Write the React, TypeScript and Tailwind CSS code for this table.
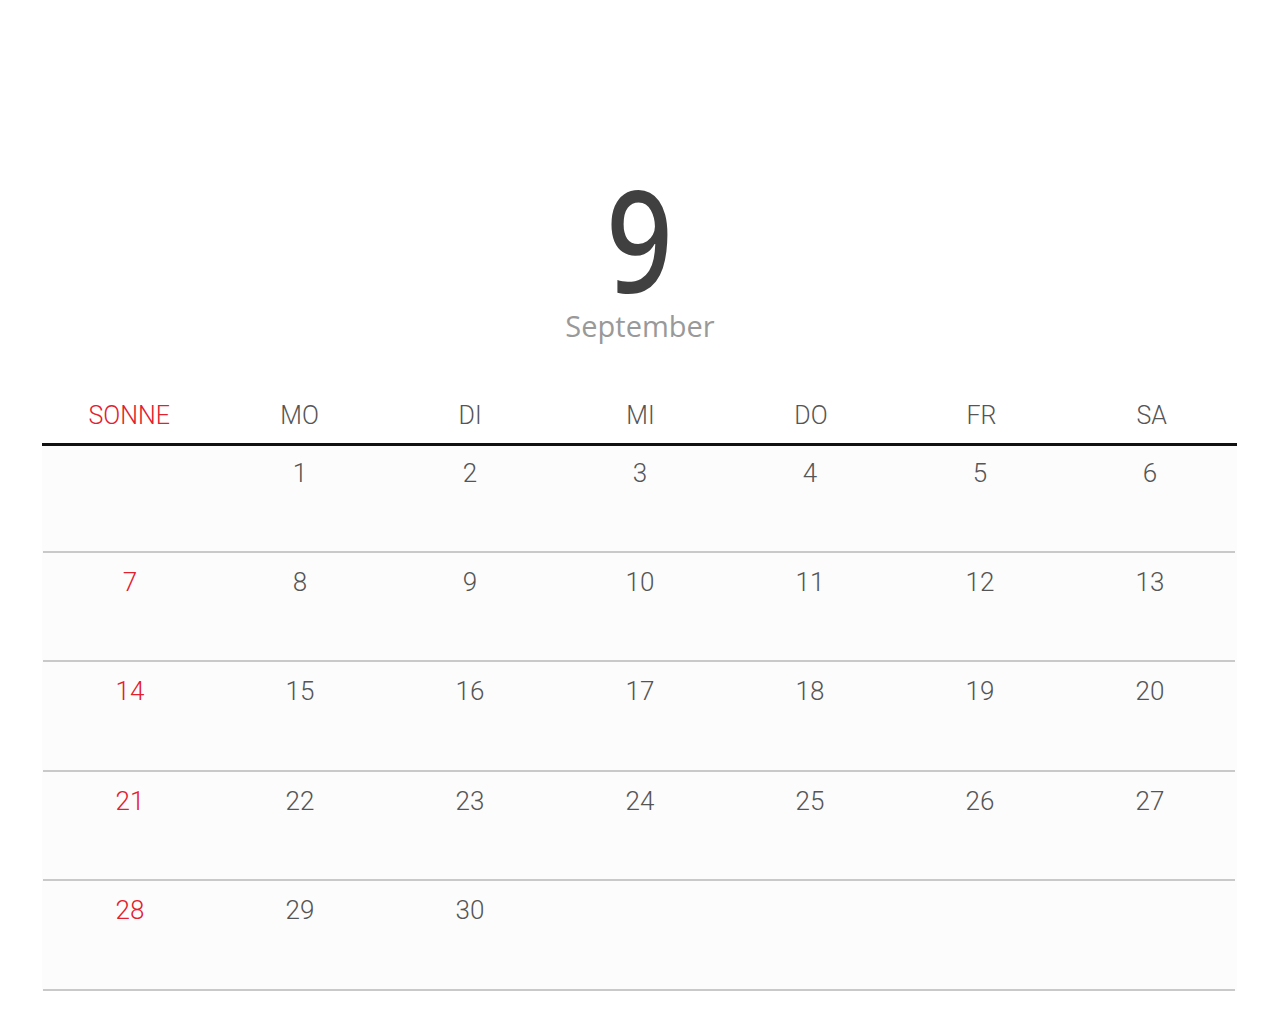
import React from "react";

const headers = ["SONNE", "MO", "DI", "MI", "DO", "FR", "SA"];
const weeks: (number | null)[][] = [
  [null, 1, 2, 3, 4, 5, 6],
  [7, 8, 9, 10, 11, 12, 13],
  [14, 15, 16, 17, 18, 19, 20],
  [21, 22, 23, 24, 25, 26, 27],
  [28, 29, 30, null, null, null, null],
];

export default function App() {
  return (
    <div className="w-[1280px] h-[1031px] bg-white overflow-hidden" style={{ fontFamily: "Roboto, 'Liberation Sans', sans-serif" }}>
      <div className="flex flex-col items-center pt-[183px]">
        <div className="text-[142px] leading-[111px] text-[#404040] font-medium scale-x-[0.82]" style={{ fontFamily: "'Noto Sans', 'Open Sans', sans-serif" }}>9</div>
        <div className="text-[29px] leading-none text-[#999] font-normal mt-[17px]" style={{ fontFamily: "'Open Sans', 'Noto Sans', sans-serif" }}>September</div>
      </div>
      <div className="pl-[42px] pr-[43px] mt-[61px]">
        <div className="grid grid-cols-7 border-b-[3px] border-[#111] pb-[12px] pl-[2px]">
          {headers.map((h, i) => (
            <div key={h} className={`text-center text-[25px] font-light leading-[30px] ${i === 0 ? "text-[#e2202e]" : "text-[#555]"}`}>{h}</div>
          ))}
        </div>
        <div className="bg-[#fcfcfc] pl-px pr-[2px]">
          {weeks.map((w, r) => (
            <div key={r} className={`grid grid-cols-7 border-b-2 border-[#c9c9c9] pl-[2px] ${r === 0 ? "h-[106.5px]" : "h-[109.5px]"}`}>
              {w.map((d, i) => (
                <div key={i} className={`text-center text-[26px] font-light leading-[30px] ${r === 0 ? "pt-[12px]" : "pt-[14px]"} ${i === 0 ? "text-[#e2202e]" : "text-[#555]"}`}>{d ?? ""}</div>
              ))}
            </div>
          ))}
        </div>
      </div>
    </div>
  );
}
